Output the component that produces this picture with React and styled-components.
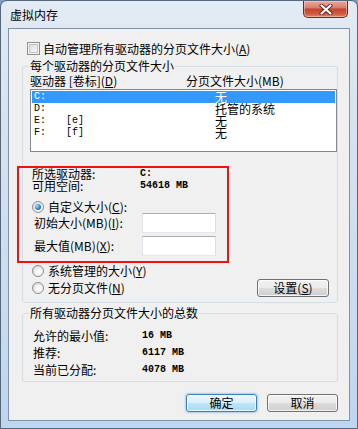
import styled, { createGlobalStyle } from "styled-components";

const GlobalStyle = createGlobalStyle`
  html, body { margin: 0; padding: 0; background: #7f9cbd; }
  body {
    font-family: "Noto Sans CJK SC", "Noto Sans", sans-serif;
    font-size: 12px;
    color: #000;
  }
  * { box-sizing: border-box; }
`;

// 창 외곽 (Aero 프레임)
const Window = styled.div`
  width: 358px;
  height: 429px;
  display: flex;
  flex-direction: column;
  padding: 0 7px 7px 7px;
  border: 1px solid #56677c;
  border-radius: 7px 7px 0 0;
  background: linear-gradient(180deg, #e3ebf4 0%, #d6e2ee 30%, #c9dbee 75%, #bcd6f1 100%);
`;

const TitleBar = styled.div`
  height: 27px;
  display: flex;
  align-items: flex-start;
`;

const Title = styled.div`
  margin: 8px 0 0 2px;
  line-height: 12px;
  font-size: 12px;
  color: #000;
`;

const CloseButton = styled.div`
  margin-left: auto;
  margin-right: 2px;
  width: 45px;
  height: 17px;
  border: 1px solid #6e2b22;
  border-top: none;
  border-radius: 0 0 5px 5px;
  background: linear-gradient(180deg, #e8a99c 0%, #d98170 40%, #c4452f 52%, #cf5c3e 80%, #e08a5e 100%);
  box-shadow: inset 0 0 0 1px rgba(255, 220, 210, 0.45);
  display: flex;
  align-items: center;
  justify-content: center;
`;

const Client = styled.div`
  flex: 1;
  display: flex;
  flex-direction: column;
  background: #f0f0f0;
  border: 1px solid #8393a6;
`;

const CheckRow = styled.label`
  margin-top: 13px;
  padding-left: 18px;
  height: 13px;
  display: flex;
  align-items: center;
  gap: 3px;
  line-height: 13px;
`;

const CheckBox = styled.span`
  width: 13px;
  height: 13px;
  flex: none;
  border: 1px solid #8e8f8f;
  background: linear-gradient(135deg, #d2d4d8 0%, #eeeeee 60%, #fbfbfb 100%);
  box-shadow: inset 0 0 0 1px #f4f4f4, inset 0 0 0 2px #c0c4c9;
`;

const Key = styled.u`
  text-decoration: underline;
  text-underline-offset: 1px;
`;

const Group = styled.fieldset`
  margin: ${(p) => p.$top}px 11px 0 13px;
  padding: ${(p) => p.$pad};
  border: 1px solid #d5dfe5;
  border-radius: 3px;
  min-width: 0;
`;

const Legend = styled.legend`
  margin-left: -1px;
  padding: 0 1px;
  line-height: 12px;
  height: 12px;
`;

const HeaderRow = styled.div`
  display: grid;
  grid-template-columns: 156px 1fr;
  height: 12px;
  line-height: 12px;
`;

const ListBox = styled.div`
  margin-top: 2px;
  height: 63px;
  border: 1px solid #828790;
  background: #fff;
  padding: 1px;
`;

const ListRow = styled.div`
  display: grid;
  grid-template-columns: 32px 149px 1fr;
  height: 12px;
  line-height: 12px;
  padding-left: 2px;
  background: ${(p) => (p.$selected ? "#3399ff" : "transparent")};
  color: ${(p) => (p.$selected ? "#fff" : "#000")};
`;

const Mono = styled.span`
  font-family: "Liberation Mono", "DejaVu Sans Mono", monospace;
  font-size: 10px;
  font-weight: ${(p) => (p.$thin ? "normal" : "bold")};
`;

// 빨간 강조 박스
const Highlight = styled.div`
  margin: 14px 0 0 -13px;
  width: 212px;
  border: 2px solid #f21010;
  padding-bottom: 5px;
`;

const InfoRow = styled.div`
  display: grid;
  grid-template-columns: 108px 1fr;
  padding-left: 13px;
  height: 12px;
  line-height: 12px;
`;

const RadioRow = styled.label`
  margin-top: ${(p) => p.$top || 0}px;
  padding-left: ${(p) => p.$indent || 0}px;
  padding-right: ${(p) => p.$right || 0}px;
  height: ${(p) => p.$height || 12}px;
  display: flex;
  align-items: center;
  gap: 4px;
  line-height: 12px;
`;

const Radio = styled.span`
  width: 12px;
  height: 12px;
  flex: none;
  border-radius: 50%;
  border: 1px solid #8e8f8f;
  background: radial-gradient(circle at 60% 60%, #ffffff 0%, #f0f0f0 45%, #c9cbce 100%);
  display: flex;
  align-items: center;
  justify-content: center;

  &::after {
    content: "";
    width: 6px;
    height: 6px;
    border-radius: 50%;
    background: ${(p) =>
      p.$checked
        ? "radial-gradient(circle at 35% 35%, #b9e0fb 0%, #3e8fd6 45%, #103f7d 100%)"
        : "transparent"};
  }
`;

const SizeRow = styled.div`
  margin-top: ${(p) => p.$top || 0}px;
  display: grid;
  grid-template-columns: 108px 74px;
  align-items: center;
  padding-left: 15px;
  height: 20px;
  line-height: 12px;
`;

const TextInput = styled.div`
  width: 74px;
  height: 20px;
  border: 1px solid;
  border-color: #abadb3 #dbdfe6 #e3e9ef #e2e3ea;
  background: #fff;
`;

const Button = styled.button`
  width: ${(p) => p.$width || 71}px;
  height: 18px;
  padding: 0;
  font: inherit;
  line-height: 16px;
  color: #000;
  border: 1px solid ${(p) => (p.$default ? "#3c7fb1" : "#707070")};
  border-radius: 3px;
  background: ${(p) =>
    p.$default
      ? "linear-gradient(180deg, #eaf6fd 0%, #d9f0fc 50%, #bee6fd 50%, #a7d9f5 100%)"
      : "linear-gradient(180deg, #f2f2f2 0%, #ebebeb 50%, #dddddd 50%, #cfcfcf 100%)"};
  box-shadow: inset 0 0 0 1px rgba(255, 255, 255, 0.75)
    ${(p) => (p.$default ? ", 0 0 2px 1px rgba(100, 180, 235, 0.55)" : "")};
  margin-left: ${(p) => (p.$push ? "auto" : "0")};
`;

const TotalRow = styled.div`
  display: grid;
  grid-template-columns: 109px 1fr;
  padding-left: 3px;
  height: 17px;
  line-height: 17px;
`;

const ButtonBar = styled.div`
  margin-top: 12px;
  padding-right: 11px;
  display: flex;
  justify-content: flex-end;
  gap: 10px;
`;

const drives = [
  { drive: "C:", label: "", size: "无", selected: true },
  { drive: "D:", label: "", size: "托管的系统" },
  { drive: "E:", label: "[e]", size: "无" },
  { drive: "F:", label: "[f]", size: "无" },
];

const totals = [
  ["允许的最小值:", "16 MB"],
  ["推荐:", "6117 MB"],
  ["当前已分配:", "4078 MB"],
];

function App() {
  return (
    <>
      <GlobalStyle />
      <Window>
        <TitleBar>
          <Title>虚拟内存</Title>
          <CloseButton>
            <svg width="14" height="11" viewBox="0 0 14 11">
              <path d="M2.5 1.5 L11.5 9.5 M11.5 1.5 L2.5 9.5" stroke="#5a231b" strokeWidth="4" strokeLinecap="round" />
              <path d="M2.5 1.5 L11.5 9.5 M11.5 1.5 L2.5 9.5" stroke="#ffffff" strokeWidth="2.2" strokeLinecap="round" />
            </svg>
          </CloseButton>
        </TitleBar>

        <Client>
          <CheckRow>
            <CheckBox />
            <span>自动管理所有驱动器的分页文件大小(<Key>A</Key>)</span>
          </CheckRow>

          <Group $top={5} $pad="3px 0 5px 7px">
            <Legend>每个驱动器的分页文件大小</Legend>
            <HeaderRow>
              <span>驱动器 [卷标](<Key>D</Key>)</span>
              <span>分页文件大小(MB)</span>
            </HeaderRow>
            <ListBox>
              {drives.map((d) => (
                <ListRow key={d.drive} $selected={d.selected}>
                  <Mono $thin>{d.drive}</Mono>
                  <Mono $thin>{d.label}</Mono>
                  <span>{d.size}</span>
                </ListRow>
              ))}
            </ListBox>

            <Highlight>
              <InfoRow>
                <span>所选驱动器:</span>
                <Mono>C:</Mono>
              </InfoRow>
              <InfoRow>
                <span>可用空间:</span>
                <Mono>54618 MB</Mono>
              </InfoRow>
              <RadioRow $top={9} $indent={13}>
                <Radio $checked />
                <span>自定义大小(<Key>C</Key>):</span>
              </RadioRow>
              <SizeRow>
                <span>初始大小(MB)(<Key>I</Key>):</span>
                <TextInput />
              </SizeRow>
              <SizeRow $top={3}>
                <span>最大值(MB)(<Key>X</Key>):</span>
                <TextInput />
              </SizeRow>
            </Highlight>

            <RadioRow $top={2} $indent={2}>
              <Radio />
              <span>系统管理的大小(<Key>Y</Key>)</span>
            </RadioRow>
            <RadioRow $top={2} $indent={2} $right={8} $height={18}>
              <Radio />
              <span>无分页文件(<Key>N</Key>)</span>
              <Button $width={72} $push>设置(<Key>S</Key>)</Button>
            </RadioRow>
          </Group>

          <Group $top={4} $pad="8px 0 3px 7px">
            <Legend>所有驱动器分页文件大小的总数</Legend>
            {totals.map(([label, value]) => (
              <TotalRow key={label}>
                <span>{label}</span>
                <Mono>{value}</Mono>
              </TotalRow>
            ))}
          </Group>

          <ButtonBar>
            <Button $default>确定</Button>
            <Button>取消</Button>
          </ButtonBar>
        </Client>
      </Window>
    </>
  );
}

export default App;
